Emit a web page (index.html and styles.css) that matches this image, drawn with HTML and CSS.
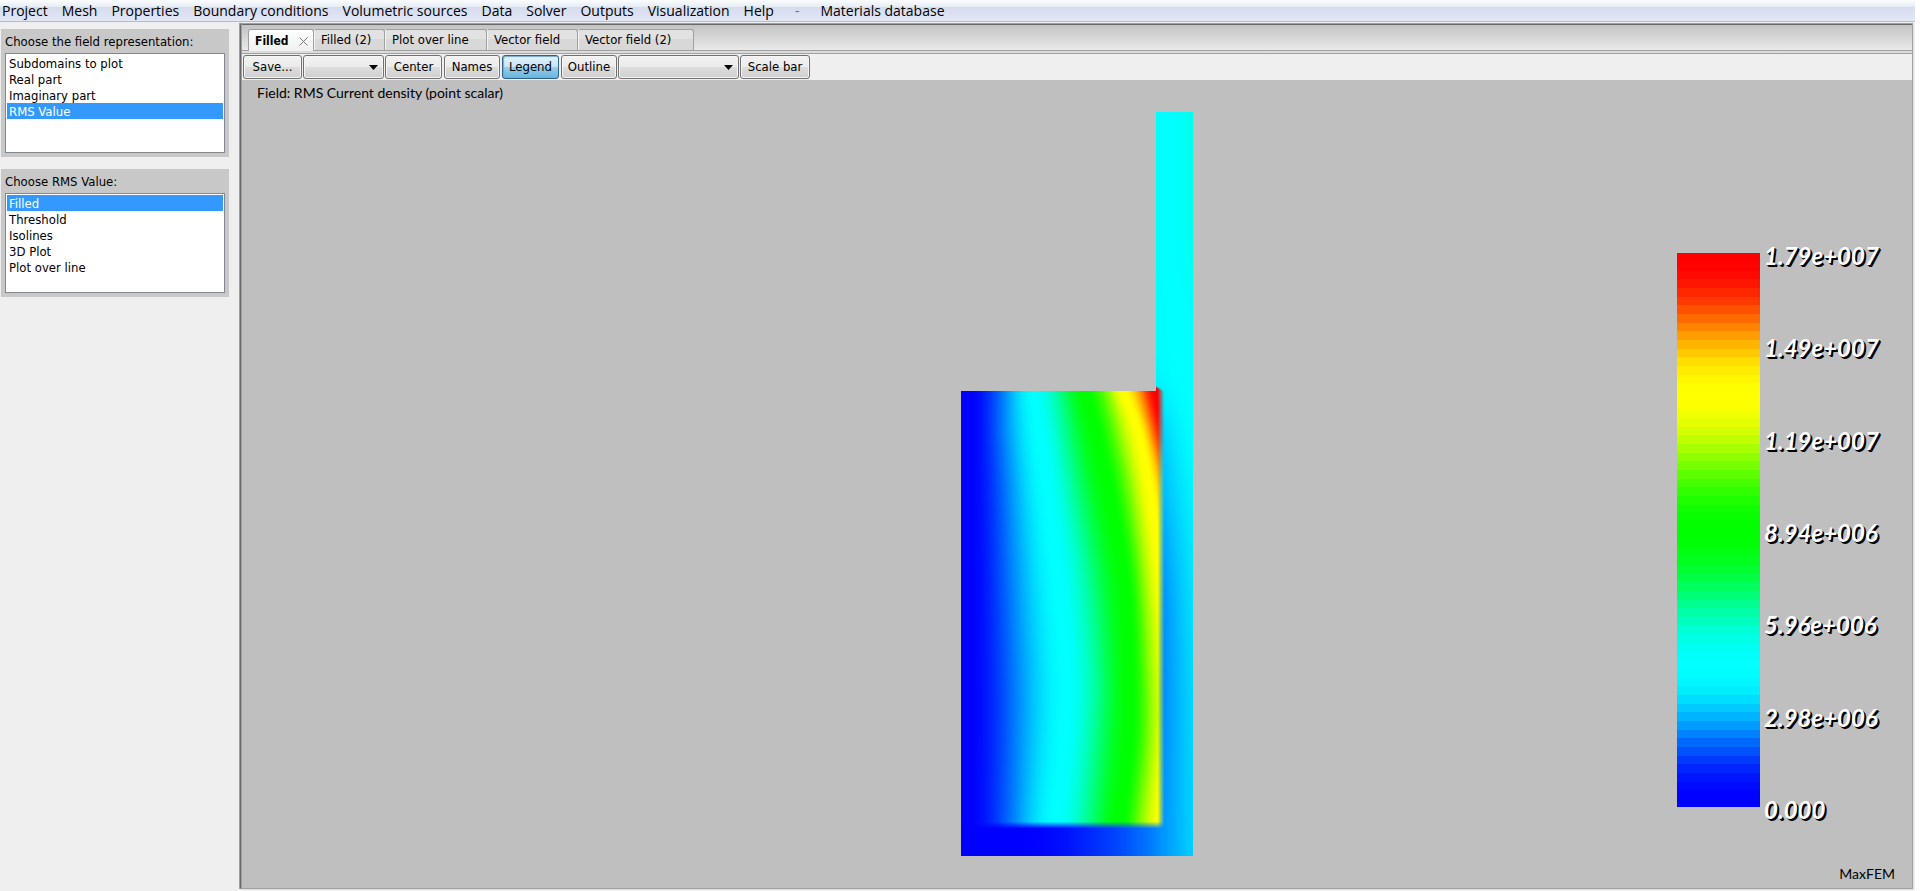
FILE: index.html
```html
<!DOCTYPE html>
<html lang="en">
<head>
<meta charset="utf-8">
<title>MaxFEM</title>
<link rel="stylesheet" href="styles.css">
</head>
<body>
<div class="window">
  <nav class="menubar" aria-label="Main menu">
    <button type="button">Project</button>
    <button type="button">Mesh</button>
    <button type="button">Properties</button>
    <button type="button">Boundary conditions</button>
    <button type="button">Volumetric sources</button>
    <button type="button">Data</button>
    <button type="button">Solver</button>
    <button type="button">Outputs</button>
    <button type="button">Visualization</button>
    <button type="button">Help</button>
    <button type="button" class="separator" disabled>-</button>
    <button type="button">Materials database</button>
  </nav>
  <div class="workspace">
    <aside class="sidebar">
      <section class="chooser">
        <label for="representation">Choose the field representation:</label>
        <select id="representation" size="6">
          <option>Subdomains to plot</option>
          <option>Real part</option>
          <option>Imaginary part</option>
          <option selected>RMS Value</option>
        </select>
      </section>
      <section class="chooser">
        <label for="rms">Choose RMS Value:</label>
        <select id="rms" size="6">
          <option selected>Filled</option>
          <option>Threshold</option>
          <option>Isolines</option>
          <option>3D Plot</option>
          <option>Plot over line</option>
        </select>
      </section>
    </aside>
    <main class="viewer">
      <div class="tabs" role="tablist">
        <button type="button" class="tab active" role="tab" aria-selected="true">Filled
          <svg class="close" viewBox="0 0 9 9" aria-hidden="true"><path d="M.5 .5L8.500 8.500M8.500 .5L.5 8.500"/></svg>
        </button>
        <button type="button" class="tab tab-s" role="tab">Filled (2)</button>
        <button type="button" class="tab tab-m" role="tab">Plot over line</button>
        <button type="button" class="tab tab-n" role="tab">Vector field</button>
        <button type="button" class="tab tab-l" role="tab">Vector field (2)</button>
      </div>
      <div class="toolbar">
        <button type="button" class="tool w59">Save...</button>
        <span class="combo w81"><select class="tool" aria-label="View"><option></option></select></span>
        <button type="button" class="tool w57 gap">Center</button>
        <button type="button" class="tool w56 gap">Names</button>
        <button type="button" class="tool w57 gap pressed" aria-pressed="true">Legend</button>
        <button type="button" class="tool w56">Outline</button>
        <span class="combo w121"><select class="tool" aria-label="Field"><option></option></select></span>
        <button type="button" class="tool w70">Scale bar</button>
      </div>
      <div class="plot">
        <p class="caption">Field: RMS Current density (point scalar)</p>
        <canvas id="field" class="field" width="232" height="744"></canvas>
        <div class="legend">
          <canvas id="ramp" class="ramp" width="1" height="554"></canvas>
          <ol class="ticks">
            <li>1.79e+007</li>
            <li>1.49e+007</li>
            <li>1.19e+007</li>
            <li>8.94e+006</li>
            <li>5.96e+006</li>
            <li>2.98e+006</li>
            <li>0.000</li>
          </ol>
        </div>
        <p class="brand">MaxFEM</p>
      </div>
    </main>
  </div>
</div>
<script src="plot.js"></script>
</body>
</html>
```
FILE: styles.css
```css
* { box-sizing: border-box; }

body {
  margin: 0;
  background: #fff;
  color: #000;
  font: 13px/16px "DejaVu Sans Condensed", "DejaVu Sans", sans-serif;
}

button, select { font: inherit; color: inherit; margin: 0; }
p, ol { margin: 0; padding: 0; list-style: none; }

.window {
  display: flex;
  flex-direction: column;
  height: 100vh;
  margin-right: 5px;
  background: #efefef;
}

.menubar {
  display: flex;
  align-items: flex-start;
  gap: 14px;
  height: 22px;
  padding-left: 2px;
  border-bottom: 1px solid #b6bccc;
  background: linear-gradient(#fbfcfe 0, #e6ecf5 7px, #d5dcee 7px, #e2e7f6 100%);
  font: 14px/22px "Open Sans", "Noto Sans", sans-serif;
}
.menubar button { padding: 0; border: 0; background: none; white-space: nowrap; }
.menubar .separator { padding: 0 7px; color: #6d6d6d; }

.workspace { display: flex; flex: 1; min-height: 0; }

.sidebar {
  display: flex;
  flex-direction: column;
  gap: 12px;
  width: 239px;
  padding: 7px 10px 0 1px;
}
.chooser { padding: 4px; background: #c8c8c8; }
.chooser label { display: block; height: 20px; line-height: 18px; white-space: nowrap; }
.chooser select {
  display: block;
  width: 100%;
  height: 100px;
  padding: 1px;
  border: 1px solid #828790;
  border-radius: 0;
  outline: 0;
  background: #fff;
  overflow: hidden;
}
.chooser option { height: 16px; min-height: 16px; padding: 1px 2px 0; line-height: 15px; }
.chooser option:checked { background: #39f linear-gradient(#39f, #39f); color: #fff; }

.viewer {
  display: flex;
  flex: 1;
  flex-direction: column;
  min-width: 0;
  margin: 1px 2px 2px 1px;
  padding-left: 1px;
  border: 1px solid #a0a0a0;
  border-left-color: #696969;
  background: #a0a0a0;
  box-shadow: -1px 0 #a0a0a0, 1px 1px #e3e3e3;
}

.tabs {
  display: flex;
  height: 30px;
  padding: 4px 0 4px 6px;
  border-top: 1px solid #696969;
  border-bottom: 1px solid #a0a0a0;
  background: linear-gradient(#dcdcdc, #dcdcdc) 0 100% / 100% 2px no-repeat,
    linear-gradient(#a0a0a0, #a0a0a0) 0 calc(100% - 2px) / 100% 1px no-repeat,
    linear-gradient(#c3c3c3, #eee);
}
.tab {
  height: 21px;
  padding: 0 6px;
  border: 1px solid #a0a0a0;
  border-width: 1px 1px 0 1px;
  border-left-color: #f4f4f4;
  border-radius: 3px 3px 0 0;
  background: linear-gradient(#e2e2e2 45%, #d8d8d8 45%);
  text-align: left;
  line-height: 18px;
  white-space: nowrap;
}
.tab.active {
  display: flex;
  align-items: center;
  justify-content: space-between;
  width: 66px;
  height: 22px;
  padding-right: 5px;
  border-left-color: #a0a0a0;
  background: #fff linear-gradient(#fff, #f0f0f0);
  font-size: 12px;
  font-weight: bold;
}
.close { width: 9px; height: 9px; margin-top: 2px; fill: none; stroke: #777; stroke-width: 1; }
.tab-s { width: 71px; }
.tab-m { width: 102px; }
.tab-n { width: 91px; }
.tab-l { width: 116px; }

.toolbar {
  display: flex;
  align-items: center;
  height: 26px;
  gap: 1px;
  padding-left: 1px;
  background: #efefef;
}
.gap { margin-right: 1px; }
.tool {
  height: 24px;
  padding: 0;
  border: 1px solid #707070;
  border-radius: 3px;
  background: linear-gradient(#f2f2f2, #ebebeb 50%, #ddd 50%, #cfcfcf);
  box-shadow: inset 0 0 0 1px #f5f5f5;
  text-align: center;
  white-space: nowrap;
}
.tool.pressed {
  border-color: #2c628b;
  background: linear-gradient(#e5f4fc, #c4e5f6 50%, #98d1ef 50%, #68b3db);
  box-shadow: inset 1px 1px 1px #7fa9c0;
}
.combo { position: relative; display: flex; }
.combo .tool { width: 100%; appearance: none; }
.combo::after {
  content: "";
  position: absolute;
  top: 10px;
  right: 6px;
  width: 9px;
  height: 5px;
  background: #000;
  clip-path: polygon(0 0, 100% 0, 50% 100%);
  pointer-events: none;
}
.w56 { width: 56px; }
.w57 { width: 57px; }
.w59 { width: 59px; }
.w70 { width: 70px; }
.w81 { width: 81px; }
.w121 { width: 121px; }

.plot {
  position: relative;
  display: grid;
  grid-template-columns: 1fr auto 1fr;
  align-items: center;
  flex: 1;
  min-height: 0;
  background: #bfbfbf;
  font-family: Lato, "Open Sans", sans-serif;
}
.caption, .brand { position: absolute; font-size: 14px; }
.caption { top: 5px; left: 15px; }
.brand { right: 17px; bottom: 6px; }
.field { grid-column: 2; height: calc(100% - 64px); aspect-ratio: 232 / 744; }

.legend {
  display: flex;
  align-self: start;
  justify-self: end;
  gap: 4px;
  height: 554px;
  margin: 173px 33px 0 0;
}
.ramp { width: 83px; height: 100%; }
.ticks {
  display: flex;
  flex-direction: column;
  justify-content: space-between;
  width: 115px;
  margin: -9px 0 -15px;
  color: #fff;
  font-size: 24px;
  font-style: italic;
  font-weight: bold;
  line-height: 24px;
  text-shadow: 1px 1px #000, 2px 2px #000;
}
```
FILE: plot.js
```js
// Scalar range 0..1 maps to blue, cyan, green, yellow, red with an S-curve on each channel.
const ease = u => (1 - Math.cos(Math.PI * Math.min(1, Math.max(0, u)))) / 2;
function colour(t) {
  const v = Math.min(1, Math.max(0, t)) * 4;
  return [255 * ease(v - 2), 255 * (v < 2 ? ease(v) : ease(4 - v)), 255 * ease(2 - v)];
}

// Legend: 64 discrete steps.
const ramp = document.getElementById('ramp');
const rc = ramp.getContext('2d');
for (let y = 0; y < ramp.height; y++) {
  const step = 63 - Math.floor(y / ramp.height * 64);
  rc.fillStyle = `rgb(${colour(step / 63).map(Math.round).join()})`;
  rc.fillRect(0, y, 1, 1);
}

function lerp(points, x) {
  let i = 1;
  while (i < points.length - 1 && points[i][0] < x) i++;
  const [a, p] = points[i - 1], [b, q] = points[i];
  return p + (q - p) * (x - a) / (b - a);
}
// Smooth interpolation through table rows [y, v0, v1, ...].
function sample(rows, y, k) {
  const n = rows.length;
  let i = 1;
  while (i < n - 1 && rows[i][0] < y) i++;
  const a = rows[i - 1], b = rows[i], h = b[0] - a[0];
  const slope = j => {
    const l = rows[Math.max(0, j - 1)], r = rows[Math.min(n - 1, j + 1)];
    return (r[k] - l[k]) / (r[0] - l[0]);
  };
  const s = Math.min(1, Math.max(0, (y - a[0]) / h));
  const s2 = s * s, s3 = s2 * s;
  return (2 * s3 - 3 * s2 + 1) * a[k] + (s3 - 2 * s2 + s) * h * slope(i - 1)
    + (3 * s2 - 2 * s3) * b[k] + (s3 - s2) * h * slope(i);
}

// Workpiece: x of each level for a given y.
const levels = [0.125, 0.25, 0.375, 0.5, 0.625, 0.75, 0.875, 1];
const core = [
  [279, 42, 72, 100, 124, 146, 162, 180, 194],
  [318, 42, 77, 106, 134, 156, 177, 190, 203],
  [378, 46, 85, 116, 148, 169, 189, 204, 219],
  [468, 50, 96, 131, 164, 181, 200, 216, 232],
  [568, 54, 104, 139, 169, 187, 208, 225, 242],
  [628, 54, 102, 136, 168, 187, 207, 224, 241],
  [708, 52, 94, 129, 159, 179, 200, 217, 234]
];
// Outer wall: level at its left and right faces.
const wall = [
  [0, 0.25, 0.295], [138, 0.25, 0.292], [190, 0.243, 0.272], [240, 0.238, 0.262],
  [279, 0.215, 0.252], [318, 0.185, 0.24], [378, 0.165, 0.218], [468, 0.142, 0.198],
  [568, 0.135, 0.188], [628, 0.137, 0.185], [708, 0.14, 0.182], [744, 0.14, 0.18]
];
const floor = [[0, 0], [60, 0.006], [89, 0.028], [122, 0.06], [156, 0.088], [189, 0.122], [232, 0.18]];

const field = document.getElementById('field');
const fc = field.getContext('2d');
const img = fc.createImageData(232, 744);
const mix = (a, b, s) => a.map((c, i) => c + (b[i] - c) * s);
const clamp = v => Math.min(1, Math.max(0, v));
for (let y = 0; y < 744; y++) {
  const line = [[0, 0], [10, 0.012]];
  levels.forEach((level, k) => line.push([sample(core, Math.min(708, Math.max(279, y)), k + 1), level]));
  const left = sample(wall, y, 1), right = sample(wall, y, 2);
  for (let x = 0; x < 232; x++) {
    if (x < 195 && y < 279) continue;
    const side = colour(left + (right - left) * Math.max(-0.1, (x - 203) / 29));
    const base = colour(lerp(floor, x));
    const outer = mix(side, base, clamp((y - 700) / 20) * clamp((232 - x) / 30));
    const inner = colour(lerp(line, Math.min(x, 197)));
    const across = clamp((203 - x) / 7);
    const down = clamp((716 - y) / 7);
    const up = clamp((y - 273 - (x - 195) * 0.6) / 3);
    const rgb = mix(x < 196 && y > 708 ? base : outer, inner, across * down * up);
    img.data.set([...rgb, 255], (y * 232 + x) * 4);
  }
}
fc.putImageData(img, 0, 0);
```
